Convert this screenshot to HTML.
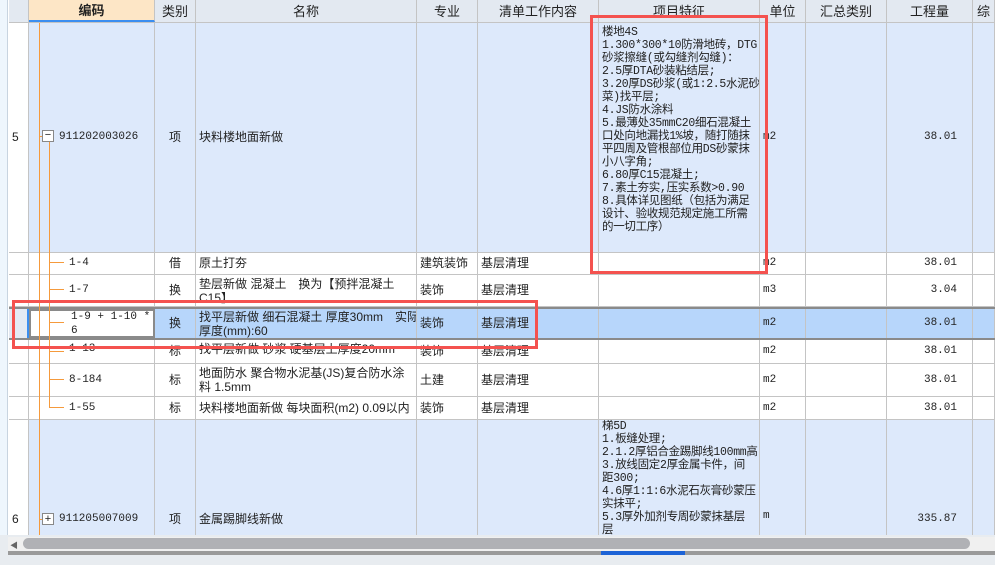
<!DOCTYPE html><html><head><meta charset="utf-8"><style>
*{box-sizing:border-box;margin:0;padding:0}
body{width:995px;height:565px;overflow:hidden;background:#fff;font-family:"Liberation Sans","Noto Sans CJK SC",sans-serif;font-size:12px;color:#222;position:relative}
.row{position:absolute;left:9px;width:986px;display:flex;border-bottom:1px solid #c4c4c4}
.row>div{border-right:1px solid #c4c4c4;height:100%;position:relative;overflow:hidden;white-space:nowrap;display:flex;align-items:center;padding-left:3px;line-height:13px}
.c0{width:20px}.c1{width:126px}.c2{width:41px;justify-content:center;padding:0!important}.c3{width:221px}.c4{width:61px}.c5{width:121px}.c6{width:161px}.c7{width:46px}.c8{width:81px}.c9{width:86px;justify-content:flex-end;padding-right:15px;padding-left:0!important}.c10{width:22px}
.hd>div{background:#e3e9f1;justify-content:center;padding:0!important;font-size:13px}
.blue>div{background:#dde9fb}
.mono{font-family:"Liberation Mono","Noto Sans CJK SC",monospace;font-size:11px}
.feat{display:block!important;padding-top:3px;line-height:13.9px;font-size:11.5px;letter-spacing:-0.3px}
.sel>div{background:#b7d6fb}
.ol{position:absolute;background:#f59a3c;z-index:5}
.red{position:absolute;border:3px solid #f4524f;z-index:6}
</style></head><body>
<div style="position:absolute;left:0;top:0;width:8px;height:535px;background:#eef6fd;border-right:1px solid #c8d4e0"></div>
<div class="row hd" style="top:0;height:23px">
<div class="c0"></div><div class="c1" style="background:#fde6c6;font-weight:bold;border-bottom:2px solid #3b8ef0">编码</div><div class="c2">类别</div><div class="c3">名称</div><div class="c4">专业</div><div class="c5">清单工作内容</div><div class="c6">项目特征</div><div class="c7">单位</div><div class="c8">汇总类别</div><div class="c9" style="justify-content:center;padding:0!important">工程量</div><div class="c10">综</div></div>
<div class="row blue" style="top:23px;height:230px">
<div class="c0" style="background:#fff">5</div><div class="c1 mono" style="padding-left:30px">911202003026</div><div class="c2">项</div><div class="c3">块料楼地面新做</div><div class="c4"></div><div class="c5"></div>
<div class="c6 mono feat">楼地4S<br>1.300*300*10防滑地砖，DTG<br>砂浆擦缝(或勾缝剂勾缝)：<br>2.5厚DTA砂装粘结层;<br>3.20厚DS砂浆(或1:2.5水泥砂<br>菜)找平层;<br>4.JS防水涂料<br>5.最薄处35mmC20细石混凝土<br>口处向地漏找1%坡，随打随抹<br>平四周及管根部位用DS砂蒙抹<br>小八字角;<br>6.80厚C15混凝土;<br>7.素土夯实,压实系数&gt;0.90<br>8.具体详见图纸（包括为满足<br>设计、验收规范规定施工所需<br>的一切工序）</div>
<div class="c7 mono">m2</div><div class="c8"></div><div class="c9 mono">38.01</div><div class="c10"></div></div>
<div class="row" style="top:253px;height:22px"><div class="c0"></div><div class="c1 mono" style="padding-left:40px">1-4</div><div class="c2">借</div><div class="c3">原土打夯</div><div class="c4">建筑装饰</div><div class="c5">基层清理</div><div class="c6"></div><div class="c7 mono">m2</div><div class="c8"></div><div class="c9 mono">38.01</div><div class="c10"></div></div>
<div class="row" style="top:275px;height:32px"><div class="c0"></div><div class="c1 mono" style="padding-left:40px">1-7</div><div class="c2">换</div><div class="c3" style="line-height:14px">垫层新做 混凝土　换为【预拌混凝土<br>C15】</div><div class="c4">装饰</div><div class="c5">基层清理</div><div class="c6"></div><div class="c7 mono">m3</div><div class="c8"></div><div class="c9 mono">3.04</div><div class="c10"></div></div>
<div class="row sel" style="top:307px;height:33px;border-top:2px solid #8a8a8a;border-bottom:2px solid #8a8a8a"><div class="c0" style="background:#e4eaf4;border-right:2px solid #3b8ef0"></div><div class="c1 mono" style="background:#fff;padding-left:40px;border:2px solid #8a8a8a;line-height:14px">1-9 + 1-10 *<br>6</div><div class="c2">换</div><div class="c3" style="line-height:14px">找平层新做 细石混凝土 厚度30mm　实际<br>厚度(mm):60</div><div class="c4">装饰</div><div class="c5">基层清理</div><div class="c6"></div><div class="c7 mono">m2</div><div class="c8"></div><div class="c9 mono">38.01</div><div class="c10"></div></div>
<div class="row" style="top:340px;height:24px"><div class="c0"></div><div class="c1 mono" style="padding-left:40px;align-items:flex-start;padding-top:3px">1-13</div><div class="c2">标</div><div class="c3" style="align-items:flex-start;padding-top:3px">找平层新做 砂浆 硬基层上厚度20mm</div><div class="c4">装饰</div><div class="c5">基层清理</div><div class="c6"></div><div class="c7 mono">m2</div><div class="c8"></div><div class="c9 mono">38.01</div><div class="c10"></div></div>
<div class="row" style="top:364px;height:33px"><div class="c0"></div><div class="c1 mono" style="padding-left:40px">8-184</div><div class="c2">标</div><div class="c3" style="line-height:14px">地面防水 聚合物水泥基(JS)复合防水涂<br>料 1.5mm</div><div class="c4">土建</div><div class="c5">基层清理</div><div class="c6"></div><div class="c7 mono">m2</div><div class="c8"></div><div class="c9 mono">38.01</div><div class="c10"></div></div>
<div class="row" style="top:397px;height:23px"><div class="c0"></div><div class="c1 mono" style="padding-left:40px">1-55</div><div class="c2">标</div><div class="c3">块料楼地面新做 每块面积(m2) 0.09以内</div><div class="c4">装饰</div><div class="c5">基层清理</div><div class="c6"></div><div class="c7 mono">m2</div><div class="c8"></div><div class="c9 mono">38.01</div><div class="c10"></div></div>
<div class="row blue" style="top:420px;height:115px;border-bottom:none"><div class="c0" style="background:#fff;align-items:flex-end;padding-bottom:9px">6</div><div class="c1 mono" style="padding-left:30px;align-items:flex-end;padding-bottom:9px">911205007009</div><div class="c2" style="align-items:flex-end;padding-bottom:9px!important">项</div><div class="c3" style="align-items:flex-end;padding-bottom:9px">金属踢脚线新做</div><div class="c4"></div><div class="c5"></div>
<div class="c6 mono feat" style="padding-top:0">梯5D<br>1.板缝处理;<br>2.1.2厚铝合金踢脚线100mm高<br>3.放线固定2厚金属卡件，间<br>距300;<br>4.6厚1:1:6水泥石灰膏砂蒙压<br>实抹平;<br>5.3厚外加剂专周砂蒙抹基层<br>层</div>
<div class="c7 mono" style="align-items:flex-end;padding-bottom:12px">m</div><div class="c8"></div><div class="c9 mono" style="align-items:flex-end;padding-bottom:9px">335.87</div><div class="c10"></div></div>
<!-- tree lines -->
<div class="ol" style="left:39px;top:23px;width:1px;height:512px"></div>
<div class="ol" style="left:49px;top:142px;width:1px;height:266px"></div>
<div class="ol" style="left:49px;top:262px;width:15px;height:1px"></div>
<div class="ol" style="left:49px;top:289px;width:15px;height:1px"></div>
<div class="ol" style="left:49px;top:322px;width:15px;height:1px"></div>
<div class="ol" style="left:49px;top:351px;width:15px;height:1px"></div>
<div class="ol" style="left:49px;top:379px;width:15px;height:1px"></div>
<div class="ol" style="left:49px;top:407px;width:15px;height:1px"></div>
<div class="ol" style="left:39px;top:136px;width:4px;height:1px"></div>
<div class="ol" style="left:39px;top:519px;width:4px;height:1px"></div>
<div style="position:absolute;z-index:7;left:42px;top:130px;width:12px;height:12px;border:1px solid #888;background:#fff;font-size:11px;line-height:9px;text-align:center">−</div>
<div style="position:absolute;z-index:7;left:42px;top:513px;width:12px;height:12px;border:1px solid #888;background:#fff;font-size:11px;line-height:10px;text-align:center">+</div>
<!-- scrollbar -->
<div style="position:absolute;left:0;top:535px;width:995px;height:30px;background:#e8ecf0"></div>
<div style="position:absolute;left:8px;top:537px;width:987px;height:14px;background:#f0f0f0"></div>
<div style="position:absolute;left:23px;top:538px;width:947px;height:11px;border-radius:6px;background:#b0b1b5"></div>
<div style="position:absolute;left:8px;top:551px;width:987px;height:4px;background:#9a9a9a"></div>
<div style="position:absolute;left:601px;top:551px;width:84px;height:4px;background:#1d63d6"></div>
<div style="position:absolute;left:10px;top:540px;font-size:8px;color:#666">◀</div>
<!-- red boxes -->
<div class="red" style="left:590px;top:15px;width:178px;height:259px"></div>
<div class="red" style="left:12px;top:300px;width:526px;height:49px"></div>
</body></html>
